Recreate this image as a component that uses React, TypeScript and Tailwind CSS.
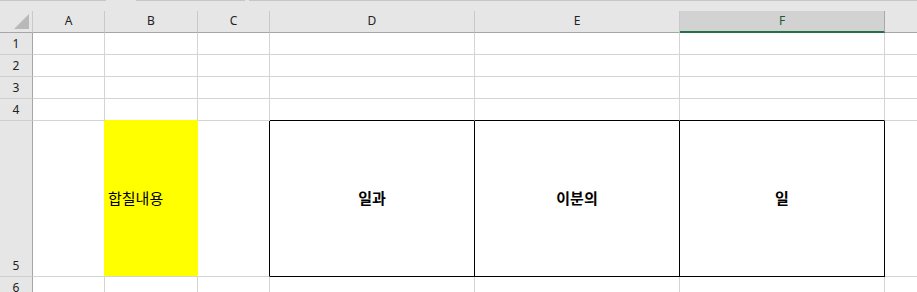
import type { ReactNode } from "react";

const HEAD_FONT = { fontFamily: '"Noto Sans", "Open Sans", sans-serif' };
const CELL_FONT = { fontFamily: '"Noto Sans CJK KR", "Noto Sans", sans-serif' };

function Cell({ className = "", children }: { className?: string; children?: ReactNode }) {
  return <div className={`flex shrink-0 ${className}`}>{children}</div>;
}

/** Row header (the grey number column on the left). */
function RowHead({ n, tall = false }: { n: number; tall?: boolean }) {
  return (
    <Cell
      className={`w-[33px] justify-center border-r border-b border-r-[#a6a6a6] border-b-[#cfcfcf] bg-[#e6e6e6] text-[12px] text-[#222] ${
        tall ? "items-end pb-[1px]" : "items-center"
      }`}
    >
      <span style={HEAD_FONT}>{n}</span>
    </Cell>
  );
}

function BlankRow({ n, bBorder = "border-b-[#d4d4d4]", dBorder = "border-b-[#d4d4d4]" }: { n: number; bBorder?: string; dBorder?: string }) {
  return (
    <div className="flex h-[22px]">
      <RowHead n={n} />
      <Cell className="w-[72px] border-r border-b border-[#d4d4d4]" />
      <Cell className={`w-[93px] border-r border-b border-r-[#d4d4d4] ${bBorder}`} />
      <Cell className="w-[72px] border-r border-b border-[#d4d4d4]" />
      <Cell className={`w-[205px] border-r border-b border-r-[#d4d4d4] ${dBorder}`} />
      <Cell className={`w-[205px] border-r border-b border-r-[#d4d4d4] ${dBorder}`} />
      <Cell className={`w-[205px] border-r border-b border-r-[#d4d4d4] ${dBorder}`} />
      <Cell className="flex-1 border-b border-[#d4d4d4]" />
    </div>
  );
}

function ColHead({ label, width }: { label: string; width: string }) {
  return (
    <Cell className={`${width} items-center justify-center border-r border-b border-r-[#c9c9c9] border-b-[#a6a6a6] pb-[2px] text-[12px] text-[#222]`}>
      <span style={HEAD_FONT}>{label}</span>
    </Cell>
  );
}

export default function App() {
  return (
    <div className="h-[292px] w-[917px] overflow-hidden bg-white">
      {/* strip above the sheet */}
      <div className="flex h-[11px] bg-[#e6e6e6]">
        <div className="w-[106px] border-t border-[#c6c6c6]" />
        <div className="w-[30px]" />
        <div className="w-[109px] border-t border-[#c6c6c6]" />
        <div className="w-[4px]" />
        <div className="flex-1 border-t border-[#c6c6c6]" />
      </div>

      {/* column headers */}
      <div className="flex h-[22px] bg-[#e6e6e6]">
        <Cell className="w-[33px] items-end justify-end border-r border-b border-r-[#c9c9c9] border-b-[#a6a6a6] pr-[3px] pb-[3px]">
          <svg width="15" height="15" viewBox="0 0 15 15">
            <path d="M15 0 L15 15 L0 15 Z" fill="#b9b9b9" />
          </svg>
        </Cell>
        <ColHead label="A" width="w-[72px]" />
        <ColHead label="B" width="w-[93px]" />
        <ColHead label="C" width="w-[72px]" />
        <ColHead label="D" width="w-[205px]" />
        <ColHead label="E" width="w-[205px]" />
        <Cell className="w-[205px] items-center justify-center border-r border-b-2 border-r-[#a9a9a9] border-b-[#217346] bg-[#d2d2d2] pb-[1px] text-[12px] text-[#24573a]">
          <span style={HEAD_FONT}>F</span>
        </Cell>
        <Cell className="flex-1 border-b border-[#a6a6a6]" />
      </div>

      <BlankRow n={1} />
      <BlankRow n={2} />
      <BlankRow n={3} />
      <BlankRow n={4} bBorder="border-b-[#ffff00]" dBorder="border-b-black" />

      {/* row 5 — tall row with the filled and bordered cells */}
      <div className="flex h-[156px]" style={CELL_FONT}>
        <RowHead n={5} tall />
        <Cell className="w-[72px] border-r border-b border-r-[#ffff00] border-b-[#d4d4d4]" />
        <Cell className="w-[93px] items-center border-r border-b border-r-[#ffff00] border-b-[#d4d4d4] bg-[#ffff00] pl-[3px] text-[15px] text-black">
          합칠내용
        </Cell>
        <Cell className="w-[72px] border-r border-b border-r-black border-b-[#d4d4d4]" />
        <Cell className="w-[205px] items-center justify-center border-r border-b border-black text-[15px] font-bold text-black">
          일과
        </Cell>
        <Cell className="w-[205px] items-center justify-center border-r border-b border-black text-[15px] font-bold text-black">
          이분의
        </Cell>
        <Cell className="w-[205px] items-center justify-center border-r border-b border-black text-[15px] font-bold text-black">
          일
        </Cell>
        <Cell className="flex-1 border-b border-[#d4d4d4]" />
      </div>

      <BlankRow n={6} />
    </div>
  );
}
